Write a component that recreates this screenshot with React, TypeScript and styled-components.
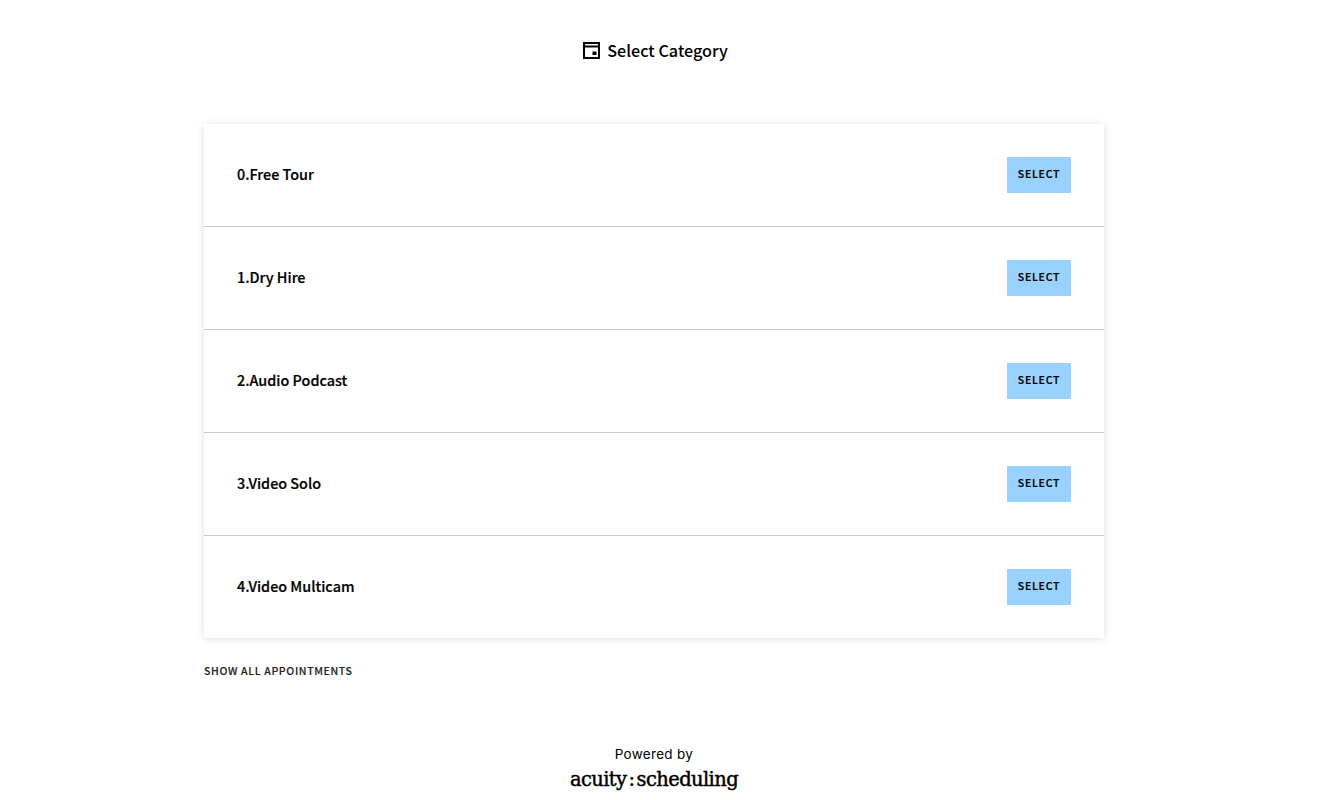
import * as React from "react";
import styled, { createGlobalStyle } from "styled-components";

const GlobalStyle = createGlobalStyle`
  html, body {
    margin: 0;
    padding: 0;
    background: #fff;
  }
  body {
    font-family: "Noto Sans CJK JP", "Open Sans", sans-serif;
    color: #000;
  }
`;

const Shell = styled.div`
  padding-right: 15px;
  height: 800px;
  overflow: hidden;
`;

const Page = styled.main`
  width: 900px;
  margin: 0 auto;
  display: flex;
  flex-direction: column;
`;

const Heading = styled.h1`
  display: flex;
  align-items: center;
  justify-content: center;
  gap: 7px;
  height: 24px;
  margin: 38px 0 62px;
  font-size: 16.2px;
  line-height: 24px;
  font-weight: 500;
  padding-left: 3px;

  & svg {
    display: block;
    margin-bottom: -1px;
  }
`;

const Card = styled.section`
  background: #fff;
  box-shadow: 0 1px 8px rgba(0, 0, 0, 0.13);
`;

const Row = styled.div`
  height: 102px;
  display: flex;
  align-items: center;
  justify-content: space-between;
  padding: 0 33px;
  & + & {
    border-top: 1px solid #c9c9c9;
  }
`;

const Name = styled.span`
  font-size: 14.4px;
  line-height: 18px;
  font-weight: 500;
  -webkit-text-stroke: 0.2px #000;
  margin-bottom: 3px;
`;

const SelectButton = styled.button`
  width: 64px;
  height: 36px;
  border: 0;
  padding: 0 0 4px;
  background: #99d2ff;
  color: #000;
  font-family: inherit;
  font-size: 10.5px;
  font-weight: 500;
  letter-spacing: 0.75px;
  -webkit-text-stroke: 0.2px #000;
`;

const ShowAll = styled.a`
  margin-top: 25px;
  font-size: 10.5px;
  line-height: 15px;
  font-weight: 500;
  letter-spacing: 0.65px;
  -webkit-text-stroke: 0.15px #222;
  color: #222;
`;

const Footer = styled.footer`
  margin-top: 68px;
  display: flex;
  flex-direction: column;
  align-items: center;
`;

const Powered = styled.span`
  font-family: Inter, "Open Sans", sans-serif;
  font-size: 13.5px;
  line-height: 16px;
  letter-spacing: 0.3px;
`;

const Logo = styled.span`
  margin-top: 5px;
  font-family: "DejaVu Serif", "Liberation Serif", serif;
  font-size: 19.5px;
  line-height: 26px;
  font-weight: 400;
  letter-spacing: -0.6px;
  -webkit-text-stroke: 0.45px #000;
`;

const LogoColon = styled.span`
  margin: 0 2px;
`;

const categories = [
  "0.Free Tour",
  "1.Dry Hire",
  "2.Audio Podcast",
  "3.Video Solo",
  "4.Video Multicam",
];

const CalendarIcon = () => (
  <svg width="17" height="17" viewBox="0 0 17 17" aria-hidden="true">
    <path d="M1 1h15v15H1z" fill="none" stroke="#000" strokeWidth="2" />
    <path d="M1 4.5h15" stroke="#000" strokeWidth="2" />
    <rect x="9.5" y="9.5" width="4" height="3.5" fill="#000" />
  </svg>
);

export default function App() {
  return (
    <>
      <GlobalStyle />
      <Shell>
        <Page>
          <Heading>
            <CalendarIcon />
            Select Category
          </Heading>
          <Card>
            {categories.map((name) => (
              <Row key={name}>
                <Name>{name}</Name>
                <SelectButton>SELECT</SelectButton>
              </Row>
            ))}
          </Card>
          <ShowAll>SHOW ALL APPOINTMENTS</ShowAll>
          <Footer>
            <Powered>Powered by</Powered>
            <Logo>
              acuity<LogoColon>:</LogoColon>scheduling
            </Logo>
          </Footer>
        </Page>
      </Shell>
    </>
  );
}
